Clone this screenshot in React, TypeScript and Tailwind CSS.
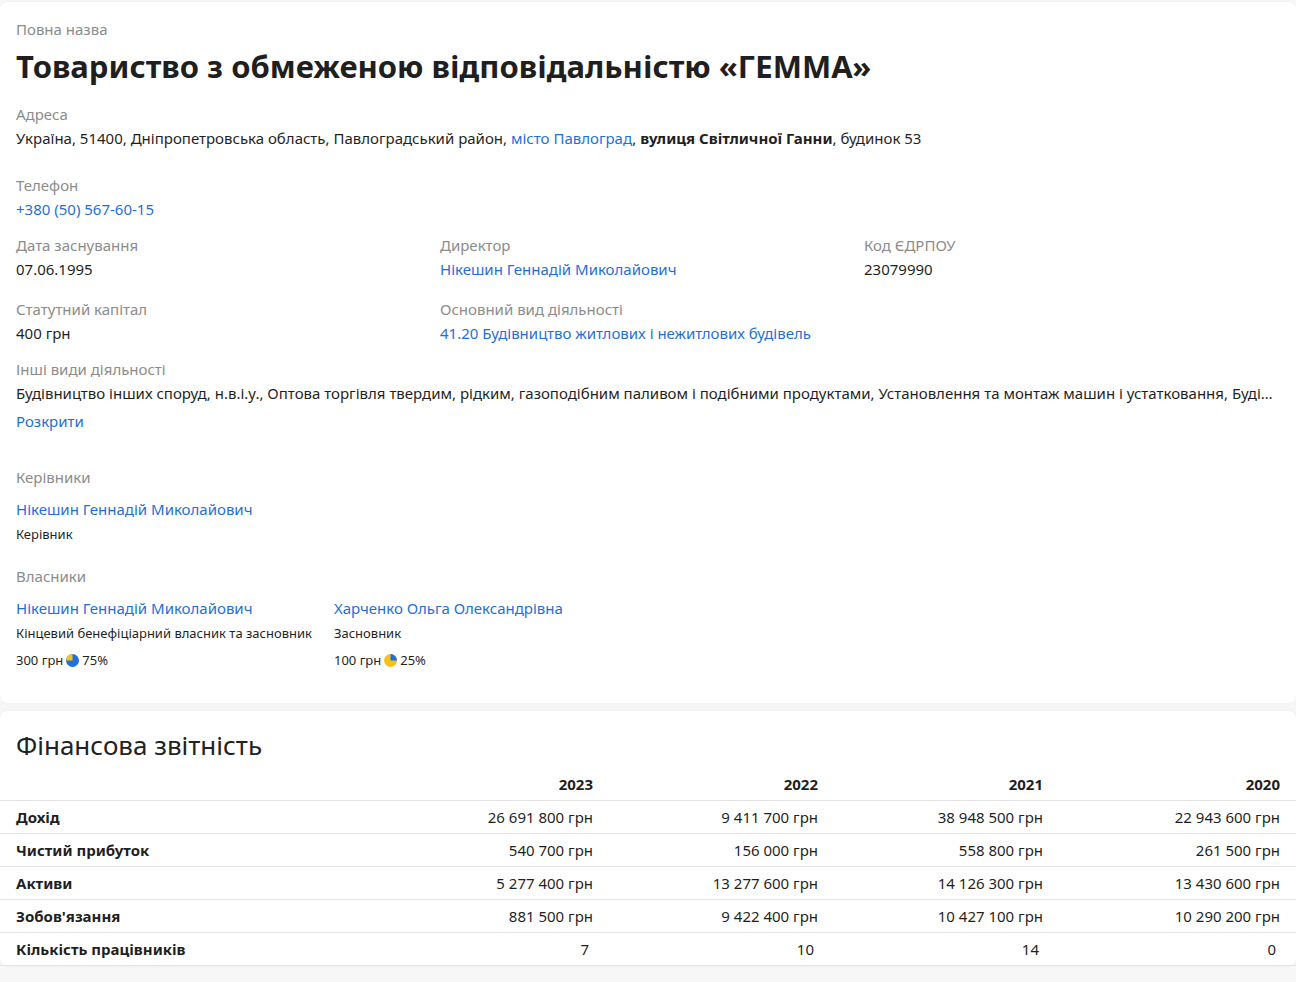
import React from 'react';

const font = { fontFamily: '"Noto Sans", "Open Sans", Arial, sans-serif' };

function Label({ children }: { children: React.ReactNode }) {
    return <div className="text-[15px] leading-6 text-[#8c8c8c]">{children}</div>;
}

function Pie({ share }: { share: 25 | 75 }) {
    // quarter slice drawn on top of the base circle
    const big = share === 75 ? '#1f6fe0' : '#f6c21a';
    const small = share === 75 ? '#f6c21a' : '#1f6fe0';
    const slice = share === 75 ? 'M6 6 L6 0 A6 6 0 0 0 0 6 Z' : 'M6 6 L6 0 A6 6 0 0 1 12 6 Z';
    return (
        <svg width="13" height="13" viewBox="0 0 12 12" className="inline-block mx-[3px] -mt-[2px]">
            <circle cx="6" cy="6" r="6" fill={big} />
            <path d={slice} fill={small} />
        </svg>
    );
}

const years = ['2023', '2022', '2021', '2020'];
const rows: { name: string; values: string[]; plain?: boolean }[] = [
    { name: 'Дохід', values: ['26 691 800 грн', '9 411 700 грн', '38 948 500 грн', '22 943 600 грн'] },
    { name: 'Чистий прибуток', values: ['540 700 грн', '156 000 грн', '558 800 грн', '261 500 грн'] },
    { name: 'Активи', values: ['5 277 400 грн', '13 277 600 грн', '14 126 300 грн', '13 430 600 грн'] },
    { name: "Зобов'язання", values: ['881 500 грн', '9 422 400 грн', '10 427 100 грн', '10 290 200 грн'] },
    { name: 'Кількість працівників', values: ['7', '10', '14', '0'], plain: true },
];

export default function App() {
    return (
        <div className="min-h-screen bg-[#f7f7f8] pt-[2px] text-[#1f1f1f]" style={font}>
            {/* Company card */}
            <div className="bg-white rounded-lg shadow-[0_0_4px_rgba(0,0,0,0.04)] px-4 pt-[15px] pb-[33px]">
                <Label>Повна назва</Label>
                <h1 className="mt-[5px] text-[31px] leading-10 font-bold text-[#1f1f1f]">
                    Товариство з обмеженою відповідальністю «ГЕММА»
                </h1>

                <div className="mt-[16px]">
                    <Label>Адреса</Label>
                    <div className="text-[15px] leading-6">
                        Україна, 51400, Дніпропетровська область, Павлоградський район,{' '}
                        <a className="text-[#1f6fd9]">місто Павлоград</a>, <b>вулиця Світличної Ганни</b>, будинок 53
                    </div>
                </div>

                <div className="mt-[23px]">
                    <Label>Телефон</Label>
                    <a className="block text-[15px] leading-6 text-[#1f6fd9]">+380 (50) 567-60-15</a>
                </div>

                <div className="mt-3 grid grid-cols-3 gap-x-2 gap-y-4">
                    <div>
                        <Label>Дата заснування</Label>
                        <div className="text-[15px] leading-6">07.06.1995</div>
                    </div>
                    <div>
                        <Label>Директор</Label>
                        <a className="block text-[15px] leading-6 text-[#1f6fd9]">Нікешин Геннадій Миколайович</a>
                    </div>
                    <div>
                        <Label>Код ЄДРПОУ</Label>
                        <div className="text-[15px] leading-6">23079990</div>
                    </div>
                    <div>
                        <Label>Статутний капітал</Label>
                        <div className="text-[15px] leading-6">400 грн</div>
                    </div>
                    <div className="col-span-2">
                        <Label>Основний вид діяльності</Label>
                        <a className="block text-[15px] leading-6 text-[#1f6fd9]">41.20 Будівництво житлових і нежитлових будівель</a>
                    </div>
                </div>

                <div className="mt-3">
                    <Label>Інші види діяльності</Label>
                    <div className="text-[15px] leading-6 truncate">
                        Будівництво інших споруд, н.в.і.у., Оптова торгівля твердим, рідким, газоподібним паливом і подібними продуктами, Установлення та монтаж машин і устатковання, Будівництво доріг і автострад
                    </div>
                    <a className="block mt-1 text-[15px] leading-6 text-[#1f6fd9]">Розкрити</a>
                </div>

                <div className="mt-8">
                    <Label>Керівники</Label>
                    <a className="block mt-2 text-[15px] leading-6 text-[#1f6fd9]">Нікешин Геннадій Миколайович</a>
                    <div className="mt-[3px] text-[13px] leading-5">Керівник</div>
                </div>

                <div className="mt-5">
                    <Label>Власники</Label>
                    <div className="mt-2 flex gap-[22px]">
                        <div>
                            <a className="block text-[15px] leading-6 text-[#1f6fd9]">Нікешин Геннадій Миколайович</a>
                            <div className="mt-[3px] text-[13px] leading-5">Кінцевий бенефіціарний власник та засновник</div>
                            <div className="mt-[7px] text-[13px] leading-5">
                                300 грн<Pie share={75} />75%
                            </div>
                        </div>
                        <div>
                            <a className="block text-[15px] leading-6 text-[#1f6fd9]">Харченко Ольга Олександрівна</a>
                            <div className="mt-[3px] text-[13px] leading-5">Засновник</div>
                            <div className="mt-[7px] text-[13px] leading-5">
                                100 грн<Pie share={25} />25%
                            </div>
                        </div>
                    </div>
                </div>
            </div>

            {/* Financial card */}
            <div className="mt-2 bg-white rounded-lg shadow-[0_0_4px_rgba(0,0,0,0.04)] pt-4">
                <h2 className="px-4 text-[26px] leading-9 font-normal text-[#222]">Фінансова звітність</h2>
                <table className="mt-[5px] w-full table-fixed border-collapse text-[15px] leading-5">
                    <colgroup>
                        <col className="w-[384px]" />
                        <col className="w-[225px]" />
                        <col className="w-[225px]" />
                        <col className="w-[225px]" />
                        <col />
                    </colgroup>
                    <thead>
                        <tr className="border-b border-[#e3e3e3]">
                            <th className="px-4 h-8" />
                            {years.map((y) => (
                                <th key={y} className="px-4 h-8 text-right font-bold whitespace-nowrap">{y}</th>
                            ))}
                        </tr>
                    </thead>
                    <tbody>
                        {rows.map((r) => (
                            <tr key={r.name} className="border-b border-[#e3e3e3]">
                                <td className="px-4 h-[33px] font-bold text-left whitespace-nowrap">{r.name}</td>
                                {r.values.map((v, i) => (
                                    <td key={i} className={`h-[33px] text-right whitespace-nowrap ${r.plain ? 'pl-4 pr-5' : 'px-4'}`}>{v}</td>
                                ))}
                            </tr>
                        ))}
                    </tbody>
                </table>
            </div>
        </div>
    );
}
